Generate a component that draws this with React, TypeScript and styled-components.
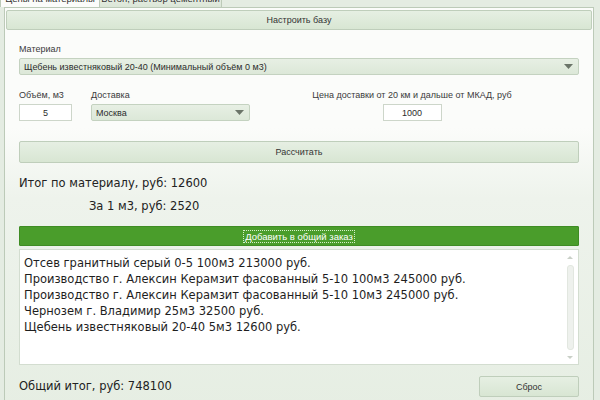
import React from 'react'
import styled, { createGlobalStyle } from 'styled-components'

const GlobalStyle = createGlobalStyle`
    html, body {
        margin: 0;
        padding: 0;
        width: 600px;
        height: 400px;
        overflow: hidden;
        background: #e4ece2;
    }
    * {
        box-sizing: border-box;
    }
`

const ORDER = [
    'Отсев гранитный серый 0-5 100м3 213000 руб.',
    'Производство г. Алексин Керамзит фасованный 5-10 100м3 245000 руб.',
    'Производство г. Алексин Керамзит фасованный 5-10 10м3 245000 руб.',
    'Чернозем г. Владимир 25м3 32500 руб.',
    'Щебень известняковый 20-40 5м3 12600 руб.',
]

function Arrow(): JSX.Element {
    return (
        <svg width="9" height="5" viewBox="0 0 9 5">
            <path d="M0 0h9L4.5 5z" fill="#6b7569" />
        </svg>
    )
}

export default function App(): JSX.Element {
    return (
        <Window>
            <GlobalStyle />
            <TabStrip>
                <Tab $active $width={100}>
                    <TabText>Цены на материалы</TabText>
                </Tab>
                <Tab $width={122}>
                    <TabText>Бетон, раствор цементный</TabText>
                </Tab>
            </TabStrip>
            <Panel>
                <Button $height={20}>Настроить базу</Button>
                <Content>
                    <Field>
                        <Label>Материал</Label>
                        <Combo>
                            <span>Щебень известняковый 20-40 (Минимальный объём 0 м3)</span>
                            <Arrow />
                        </Combo>
                    </Field>
                    <Row>
                        <Field>
                            <Label>Объём, м3</Label>
                            <Input $width={53}>5</Input>
                        </Field>
                        <Field>
                            <Label>Доставка</Label>
                            <Combo $width={159}>
                                <span>Москва</span>
                                <Arrow />
                            </Combo>
                        </Field>
                        <PriceField>
                            <Label>Цена доставки от 20 км и дальше от МКАД, руб</Label>
                            <Input $width={59}>1000</Input>
                        </PriceField>
                    </Row>
                    <Button $height={22}>Рассчитать</Button>
                    <Totals>
                        <Total>Итог по материалу, руб: 12600</Total>
                        <Total $indent={70}>За 1 м3, руб: 2520</Total>
                    </Totals>
                    <AddButton>
                        <Focus>Добавить в общий заказ</Focus>
                    </AddButton>
                    <OrderBox>
                        <OrderLines>
                            {ORDER.map((line, i) => (
                                <div key={i}>{line}</div>
                            ))}
                        </OrderLines>
                        <ScrollBar>
                            <ScrollArrow $up />
                            <ScrollTrack />
                            <ScrollArrow />
                        </ScrollBar>
                    </OrderBox>
                    <Footer>
                        <Total>Общий итог, руб: 748100</Total>
                        <Button $width={100} $height={21}>Сброс</Button>
                    </Footer>
                </Content>
            </Panel>
        </Window>
    )
}

const Window = styled.div`
    width: 600px;
    height: 400px;
    display: flex;
    flex-direction: column;
    padding: 0 6px 0 4px;
    font-family: 'Liberation Sans', Arial, sans-serif;
    font-size: 9px;
    color: #2a2a2a;
    overflow: hidden;
`

const TabStrip = styled.div`
    display: flex;
    height: 7px;
    margin-left: -4px;
    overflow: hidden;
`

// the tab headers sit mostly above the visible area, only their lower part shows
const Tab = styled.div<{ $active?: boolean; $width: number }>`
    width: ${(p) => p.$width}px;
    height: 7px;
    display: flex;
    align-items: flex-end;
    justify-content: center;
    overflow: hidden;
    background: ${(p) => (p.$active ? '#fbfcfa' : 'linear-gradient(#e3ebe0, #dbe6d7)')};
    border-right: 1px solid #bccab8;
    ${(p) => (p.$active ? 'border-left: 1px solid #bccab8;' : '')}
`

const TabText = styled.span`
    white-space: nowrap;
    font-size: 9.5px;
    line-height: 11px;
    margin-bottom: 3px;
    color: #333;
`

const Panel = styled.div`
    flex: 1;
    display: flex;
    flex-direction: column;
    border: 1px solid #bccab8;
    border-bottom: none;
    background: linear-gradient(#fbfcfa 0px, #fbfcfa 120px, #eef3ec 190px, #e6eee3 400px);
    padding: 2px 1px 0 1px;
`

const Button = styled.div<{ $width?: number; $height?: number }>`
    display: flex;
    align-items: center;
    justify-content: center;
    flex-shrink: 0;
    width: ${(p) => (p.$width ? `${p.$width}px` : 'auto')};
    height: ${(p) => p.$height || 20}px;
    border: 1px solid #bfcebb;
    border-radius: 2px;
    background: linear-gradient(#e6efe3, #d8e6d3);
    color: #333;
    font-size: 9px;
`

const Content = styled.div`
    display: flex;
    flex-direction: column;
    padding: 13px 13px 0 13px;
`

const Field = styled.div`
    display: flex;
    flex-direction: column;
    gap: 3px;
`

const Label = styled.div`
    font-size: 9px;
    line-height: 12px;
    color: #3a3a3a;
    white-space: nowrap;
`

const Combo = styled.div<{ $width?: number }>`
    display: flex;
    align-items: center;
    justify-content: space-between;
    width: ${(p) => (p.$width ? `${p.$width}px` : 'auto')};
    height: 17px;
    padding: 0 4px;
    border: 1px solid #c4d2c0;
    border-radius: 2px;
    background: linear-gradient(#e7efe4, #dce8d8);
    font-size: 9px;
    color: #2c2c2c;
    svg {
        margin-right: 1px;
    }
`

const Input = styled.div<{ $width: number }>`
    width: ${(p) => p.$width}px;
    height: 17px;
    display: flex;
    align-items: center;
    justify-content: center;
    background: #fff;
    border: 1px solid #cdd6ca;
    font-size: 9px;
    color: #2c2c2c;
`

const Row = styled.div`
    display: flex;
    gap: 19px;
    margin-top: 14px;
    margin-bottom: 20px;
`

const PriceField = styled(Field)`
    width: 200px;
    align-items: center;
    margin-left: 43px;
`

const Totals = styled.div`
    display: flex;
    flex-direction: column;
    gap: 8px;
    margin: 13px 0 12px 0;
`

const Total = styled.div<{ $indent?: number }>`
    font-family: 'DejaVu Sans', Verdana, sans-serif;
    font-size: 11.5px;
    line-height: 15px;
    color: #222;
    padding-left: ${(p) => p.$indent || 0}px;
`

const AddButton = styled.div`
    height: 20px;
    display: flex;
    align-items: center;
    justify-content: center;
    background: #4a9d2b;
    border: 1px solid #3f8c24;
    border-radius: 1px;
`

const Focus = styled.span`
    color: #fff;
    font-size: 9.5px;
    line-height: 11px;
    padding: 0 1px;
    outline: 1px dotted #d6efc9;
`

const OrderBox = styled.div`
    margin-top: 3px;
    height: 116px;
    display: flex;
    background: #fff;
    border: 1px solid #d3ddd0;
`

const OrderLines = styled.div`
    flex: 1;
    padding: 5px 4px;
    font-family: 'DejaVu Sans', Verdana, sans-serif;
    font-size: 11.5px;
    line-height: 16px;
    color: #1e1e1e;
`

const ScrollBar = styled.div`
    width: 12px;
    display: flex;
    flex-direction: column;
    align-items: center;
    padding: 6px 0 5px;
    margin-right: 2px;
`

const ScrollArrow = styled.div<{ $up?: boolean }>`
    width: 0;
    height: 0;
    border-left: 3px solid transparent;
    border-right: 3px solid transparent;
    ${(p) => (p.$up ? 'border-bottom: 3px solid #c9d0c7;' : 'border-top: 3px solid #c9d0c7;')}
`

const ScrollTrack = styled.div`
    flex: 1;
    width: 7px;
    margin: 6px 0;
    border-radius: 3px;
    background: #eef1ed;
    border: 1px solid #e2e7e0;
`

const Footer = styled.div`
    display: flex;
    align-items: center;
    justify-content: space-between;
    margin-top: 11px;
`
